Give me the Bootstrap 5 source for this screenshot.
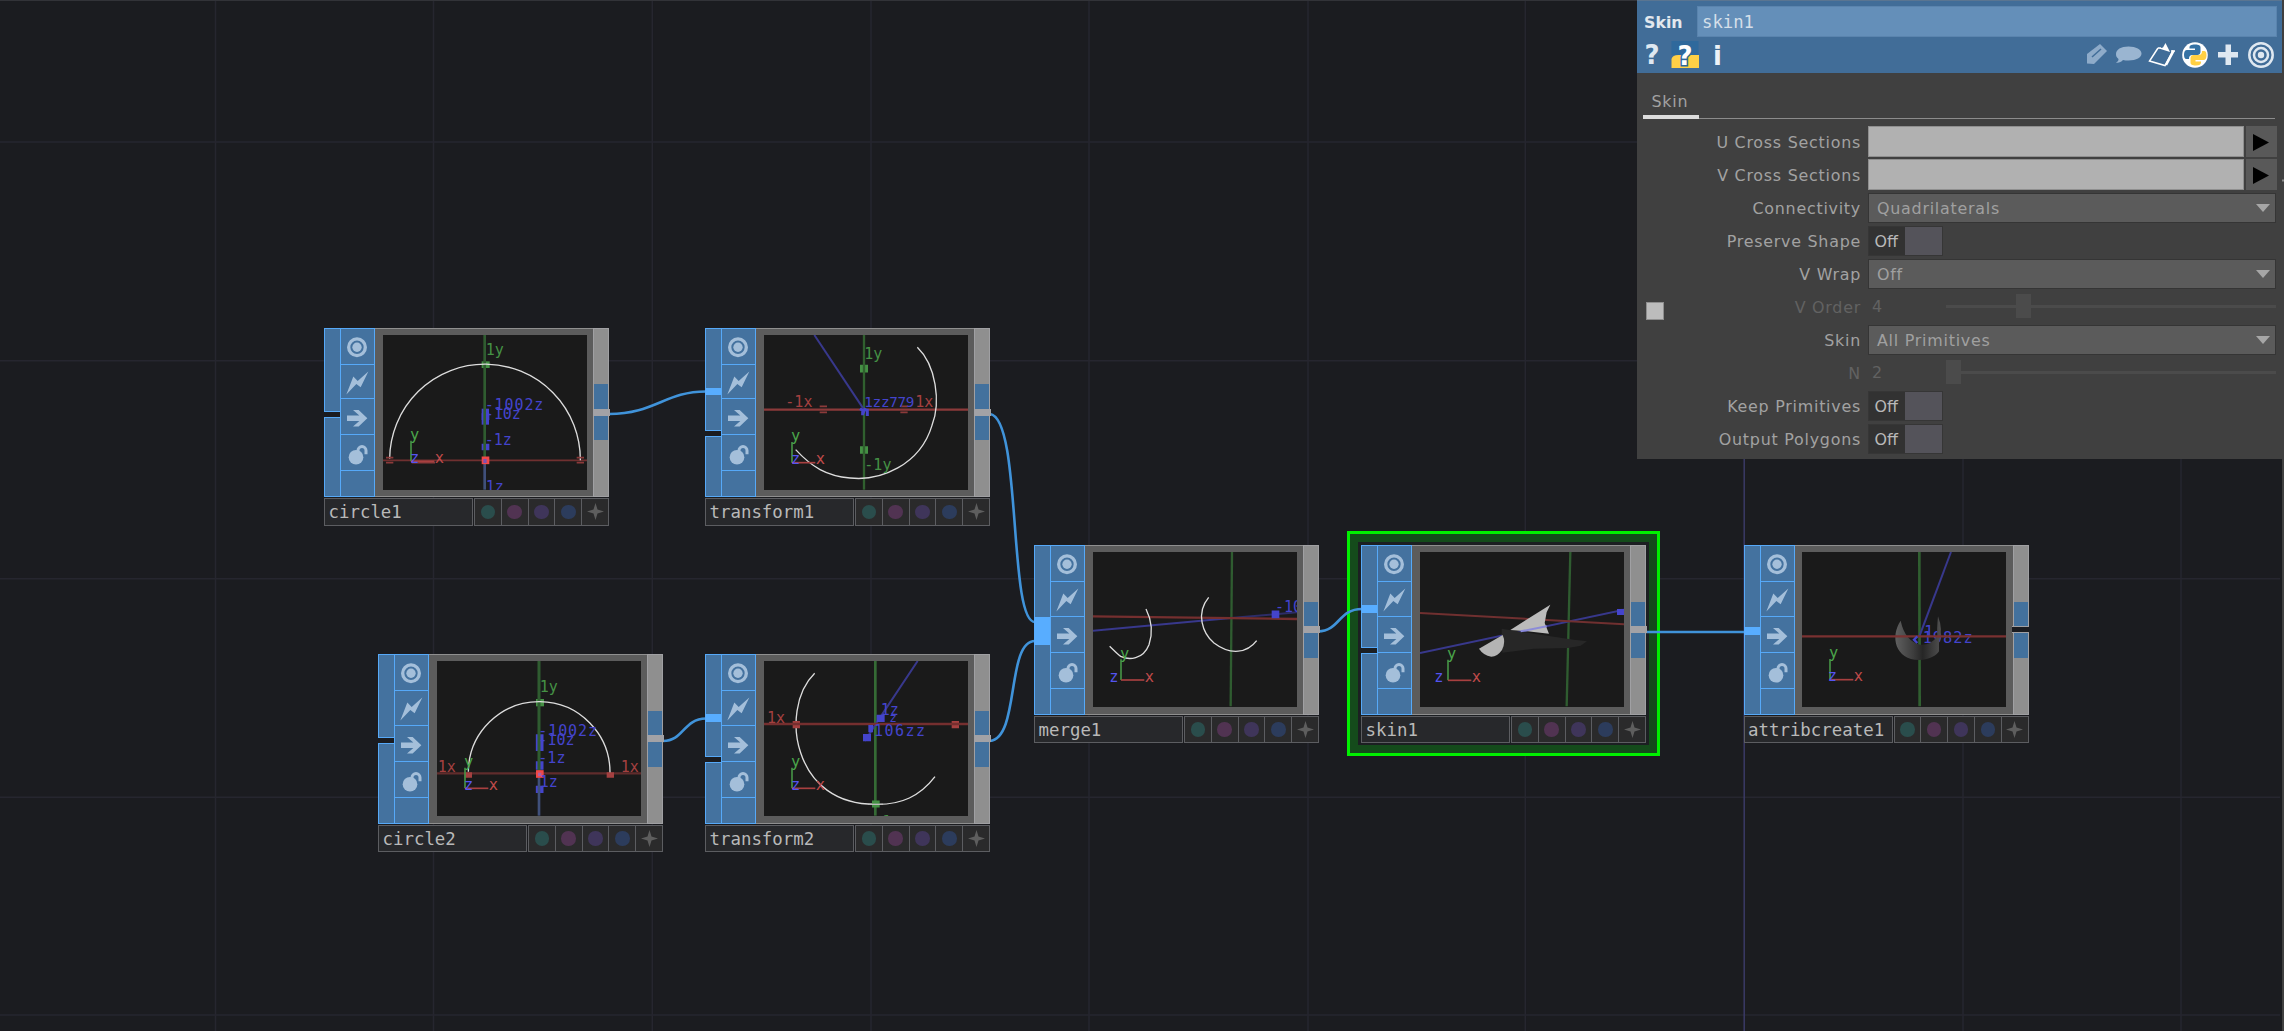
<!DOCTYPE html>
<html lang="en">
<head>
<meta charset="utf-8">
<title>Network editor</title>
<link href="https://cdn.jsdelivr.net/npm/bootstrap@5.3.0/dist/css/bootstrap.min.css" rel="stylesheet">
<style>
body{background:#1b1c20;font-family:"DejaVu Sans",sans-serif;width:2284px;height:1031px;overflow:hidden}
.network{width:2284px;height:1031px;overflow:hidden}
.network>svg{left:0;top:0}
.op{width:285px}
.op-body{height:169.5px}
.inputs{width:17px;margin-right:-1px}
.in-seg{background:#44729f;border:1.5px solid #56a9f8}
.plug{left:0;width:16px;background:#58adff}
.flags{width:35px;background:#44729f;border:1.5px solid #56a9f8}
.flags svg{width:33px;display:block;border-bottom:1.5px solid #56a9f8}
.viewer{width:218px;background:#5c5c5c;border:1.5px solid #8f8f8f;border-width:1.5px 0 1.5px 0;padding:6px 6.5px 5.5px 7.5px}
.viewer svg{width:204px;height:155px;display:block;background:#1a1a1a;font:51px "DejaVu Sans Mono",monospace}
.outs{width:16px;background:#8f8f8f;border:1.5px solid #a0a0a3}
.outs i{display:block;height:24.5px;background:#43719d;width:14px}
.op-foot{margin-top:1px;height:27.5px}
.op-name{width:149px;background:#27282b;border:1.5px solid #5c5d61;color:#b9b9b9;font:17.4px/26px "DejaVu Sans Mono",monospace;padding-left:3.500px;margin-right:1px;white-space:nowrap}
.swatches{width:135px;background:#2a2a2b;border:1.5px solid #5c5d61}
.swatches span{flex:1;border-right:1.5px solid #5c5d61}
.swatches span:last-child{border:0}
.swatches i{width:14.5px;height:14.5px;border-radius:50%;display:block}
.picked{left:1347px;top:531px;width:313px;height:225px;border:3px solid #00f000;background:#144b1b;padding:8px}
.picked div{background:#1c1f22}
.panel{left:1637px;top:0;width:645px;height:459px;background:#404040;color:#a2a2a2;font-size:15.900px;letter-spacing:.75px}
.head{height:72.5px;background:#416d98;border-top:1px solid #5a7591;padding:5px 5px 0 7px}
.head strong{width:53px;color:#e3e8ee;font-size:15.800px;letter-spacing:0;padding-top:5px}
.op-field{height:30.5px;background:#648fb9;border:1px solid #5a84ae;color:#d5dfe9;font:17.3px/30px "DejaVu Sans Mono",monospace;letter-spacing:0;padding-left:4px}
.tools{height:34px;margin-top:-1px}
.edge{left:2282px;top:0;width:2px;height:1031px;background:#404040}
.tabs{margin:15.5px 7px 0 6px;height:31px;border-bottom:1.5px solid #8c8c8c}
.tabs span{width:55.5px;height:31px;line-height:28px;border-bottom:4px solid #dcdcdc;padding-left:8.500px}
.params{padding-top:6px}
.prm{height:33px}
.prm label{width:224px;text-align:right;line-height:36px;margin-right:7px;white-space:nowrap}
.off-state{color:#626262}
.fld{height:31px;width:375.5px;margin-top:1px;background:#b1b1b1;border:solid #8f8f8f;border-width:1px}
.go{height:31px;width:31px;background:#595959;margin:1px 0 0 2.5px;padding:8px 0 0 6.5px}
.menu-fld{width:408px;height:30px;margin-top:1.5px;background:#5b5b5b;border:1.5px solid #353535;padding:0 5px 0 8px;line-height:30px;color:#a0a0a0}
.menu-fld span{padding-top:2px}
.tog{width:75px;height:30px;margin-top:1.5px;background:#323232;border:1.5px solid #363636;padding-left:5.500px;color:#b9b9b9;letter-spacing:0;line-height:30px}
.tog i{width:37px;height:28px;background:#54535a}
.val{width:78px;padding-left:4px;line-height:33px}
.track{width:330px;height:24px;margin-top:4px}
.track i{height:3px;background:#4b4b4b;flex:1}
.track b{width:15px;height:24px;background:#4b4b4b}
.check{width:18px;height:18px;background:#bcbcbc;border:1.5px solid #8e8e8e;margin:11.5px 0 0 9px}
.prm.chk label{width:197px}
.arrow{width:14px;height:8px}
</style>
<script src="https://cdn.jsdelivr.net/npm/bootstrap@5.3.0/dist/js/bootstrap.bundle.min.js"></script>
</head>
<body>
<main class="network position-relative">
<svg class="position-absolute" width="2284" height="1031" fill="none">
  <g stroke="#26262f" stroke-width="1.5">
    <path d="M215.5 0V1031M433.5 0V1031M652.3 0V1031M871 0V1031M1089 0V1031M1308 0V1031M1525.3 0V1031M1963 0V1031M2181 0V1031"/>
    <path d="M0 142H2280M0 360.8H2280M0 578.7H2280M0 797.3H2280M0 1015H2280"/>
  </g>
  <path d="M1744.2 0V1031" stroke="#3a3a66" stroke-width="1.5"/>
  <path d="M0 .5H2284" stroke="#323338"/>
</svg>
<div class="picked position-absolute d-flex"><div class="flex-fill"></div></div>
<svg class="position-absolute" width="2284" height="1031" fill="none" stroke="#4093da" stroke-width="2.6">
  <path d="M609 414C655 414 665 391.500 706 391.500"/>
  <path d="M663 741C684 741 683 719 706 718.500"/>
  <path d="M990 414C1022 418 1008 622 1035 622"/>
  <path d="M990 741C1020 738 1006 641 1035 641"/>
  <path d="M1318 631.500C1340 631 1338 609 1362 609"/>
  <path d="M1645 632H1744"/>
</svg>
<div id="ops"></div>

<section class="panel position-absolute">
  <div class="head">
    <div class="d-flex"><strong>Skin</strong><div class="op-field flex-fill">skin1</div></div>
    <svg class="tools d-block" width="633" height="34" viewBox="1644 36 633 34">
      <g font-family="DejaVu Sans" font-weight="bold" font-size="26" fill="#dfe8f1" letter-spacing="0">
        <text x="1644.500" y="64">?</text>
        <path fill="#2f699c" d="M1671.500 41h27v14h-27z"/>
        <path fill="#ffd046" d="M1671.500 68V59q1-4 7-4h20.500V68z"/>
        <text x="1677.500" y="64.500" stroke="#2f699c" stroke-width="3" paint-order="stroke" fill="#fff">?</text>
        <text x="1713" y="64.500" fill="#edf2f7">i</text>
      </g>
      <path fill="#8eabc9" d="M2087 63.500V54l13-10 7 7-13 13z"/><path stroke="#416d98" stroke-width="1.500" d="M2092 57l9-8"/>
      <path fill="#9ab5d1" d="M2128.500 46.500c7.500 0 13 3 13 7s-5 7-13 7c-2 0-4 0-5.500-.5-2 2.500-5 3-7 2.500 2-1 2.500-2 2.500-3.500-2-1.500-2.500-3-2.500-5 0-4.500 5-7.500 12.500-7.500z"/>
      <g fill="none" stroke="#fff" stroke-width="1.500"><path d="M2158 48l-8.500 13 15.500 4.500 8-15"/><path d="M2173.500 51l-7.500 14" stroke-width="2.500"/><path d="M2158 48l3 0M2171 51h4"/><path stroke="none" fill="#fff" d="M2159 48.500l4-1 2.500-4.500 2.500 5 2 4z"/></g>
      <circle cx="2195" cy="55" r="12.800" fill="#fff"/>
      <path fill="#3572a5" d="M2195 44.500c4 0 5.500 1 5.500 3v4.500c0 2-1.500 3-3 3h-5c-2.500 0-3.500 1.500-3.500 4h-2.500c-2 0-2.500-2-2.500-4.500s1-4.500 3-4.500h8v-1.500h-5.500v-1c0-2 1.500-3 5.500-3z"/>
      <path fill="#ffd043" d="M2196 65.500c-4 0-5.500-1-5.500-3V58c0-2 1.500-3 3-3h5c2.500 0 3.500-1.500 3.500-4h2c2 0 2.500 2 2.500 4.500s-1 4.500-3 4.500h-8v1.500h5.500v1c0 2-1.500 3-5 3z"/>
      <path fill="#dfe8f1" d="M2225.500 44.500h5.500v7.500h7v5.500h-7v7.500h-5.500v-7.500h-7.500v-5.500h7.500z"/>
      <g fill="none" stroke="#dfe8f1" stroke-width="2.500"><circle cx="2261" cy="55" r="11.700"/><circle cx="2261" cy="55" r="7"/></g><circle cx="2261" cy="55" r="3.200" fill="#dfe8f1"/>
    </svg>
  </div>
  <div class="tabs d-flex"><span>Skin</span></div>
  <div class="params">
    <div class="prm d-flex"><label>U Cross Sections</label><div class="fld"></div><div class="go"><svg width="16" height="17" class="d-block"><path d="M0 0L16 8.500 0 17z"/></svg></div></div>
    <div class="prm d-flex"><label>V Cross Sections</label><div class="fld"></div><div class="go"><svg width="16" height="17" class="d-block"><path d="M0 0L16 8.500 0 17z"/></svg></div></div>
    <div class="prm d-flex"><label>Connectivity</label><div class="menu-fld d-flex justify-content-between align-items-center"><span>Quadrilaterals</span><svg class="arrow"><path d="M0 0H14L7 8z" fill="#a6a6a6"/></svg></div></div>
    <div class="prm d-flex"><label>Preserve Shape</label><div class="tog d-flex justify-content-between"><span>Off</span><i></i></div></div>
    <div class="prm d-flex"><label>V Wrap</label><div class="menu-fld d-flex justify-content-between align-items-center"><span>Off</span><svg class="arrow"><path d="M0 0H14L7 8z" fill="#a6a6a6"/></svg></div></div>
    <div class="prm chk d-flex off-state"><div class="check"></div><label>V Order</label><span class="val">4</span><div class="track d-flex align-items-center"><i style="flex:0 0 70px"></i><b></b><i></i></div></div>
    <div class="prm d-flex"><label>Skin</label><div class="menu-fld d-flex justify-content-between align-items-center"><span>All Primitives</span><svg class="arrow"><path d="M0 0H14L7 8z" fill="#a6a6a6"/></svg></div></div>
    <div class="prm d-flex off-state"><label>N</label><span class="val">2</span><div class="track d-flex align-items-center"><b></b><i></i></div></div>
    <div class="prm d-flex"><label>Keep Primitives</label><div class="tog d-flex justify-content-between"><span>Off</span><i></i></div></div>
    <div class="prm d-flex"><label>Output Polygons</label><div class="tog d-flex justify-content-between"><span>Off</span><i></i></div></div>
  </div>
</section>
<div class="edge position-absolute"></div>
<svg class="position-absolute" width="2284" height="1031"><path d="M2282 180.500h2" stroke="#8a8a8a" stroke-width="2"/></svg>
</main>
<script>
const R='#8c3a3a', G='#2f5c30', B='#38388c';
// Small x / y / z gnomon drawn in the corner of each viewer.
const axes=(x,y,zx=0)=>`<path d="M${x} ${y}V${y-62}" stroke="#459145" stroke-width="5"/><path d="M${x} ${y}H${x+70}" stroke="#a84040" stroke-width="5"/><g font-size="46"><text x="${x-3}" y="${y-64}" fill="#4ba64b">y</text><text x="${x+71}" y="${y+5}" fill="#c04a4a">x</text><text x="${x-3+zx}" y="${y+5}" fill="#5454f0">z</text></g>`;
// Axis label; w fixes the advance width where several labels run together.
const t=(x,y,s,c,z=45,w=0)=>`<text x="${x}" y="${y}" fill="${c}" font-size="${z}"${w?` textLength="${w}"`:''}>${s}</text>`;
const gz='#459145', rz='#a44040', bz='#4444cc';
const ops=[
 {n:'circle1',x:324,y:327.5,gap:84,vb:'219 59',d:
  `<path d="M515 304h23M515 395h23" stroke="${bz}" stroke-width="20"/><path d="M526 280v48" stroke="${bz}" stroke-width="22"/><path d="M515 148h24" stroke="${gz}" stroke-width="20"/>
  <path d="M219 435H831" stroke="#703030" stroke-width="5"/><path d="M524 59V435" stroke="${G}" stroke-width="8"/><path d="M524 435V523" stroke="#40507a" stroke-width="8"/>
  <path d="M239 430A286 286 0 0 1 811 435" stroke="#ddd" stroke-width="4"/>
  <path d="M228 427h22M228 442h22M800 427h22M800 442h22M305 442h70" stroke="${R}" stroke-width="5"/>
  <path d="M515 435h23" stroke="#f04848" stroke-width="23"/><path d="M520 437h10" stroke="#8050b0" stroke-width="12"/>${t(527,118,'1y',gz)}${t(524,283,'-1002z',bz,45,176)}${t(524,311,'-10z',bz)}${t(524,388,'-1z',bz)}${t(527,529,'1z',bz)}${axes(303,438)}`},
 {n:'transform1',x:705,y:327.5,plug:60,gap:103,vb:'222 59',d:
  `<path d="M510 160h24M510 404h24" stroke="${gz}" stroke-width="23"/><path d="M222 283H834" stroke="${R}" stroke-width="7"/><path d="M522 59V523" stroke="#30602f" stroke-width="7"/><path d="M373 59L522 283" stroke="${B}" stroke-width="6"/><path d="M682 96C738 150 753 260 726 330C690 450 570 498 480 488C410 482 365 455 317 403" stroke="#ddd" stroke-width="4"/>
  <path d="M389 273h22M389 291h22M631 273h22M631 291h22" stroke="${R}" stroke-width="5"/><path d="M510 280l8 6v14m8-22l-8 18m14-16v22" stroke="${bz}" stroke-width="9"/>
  ${t(523,132,'1y',gz)}${t(523,463,'-1y',gz)}${t(286,274,'-1x',rz)}${t(676,274,'1x',rz)}${t(523,274,'1zz779',bz,43,150)}${axes(306,442)}`},
 {n:'circle2',x:378,y:654,gap:84,vb:'216 50',d:
  `<path d="M524 270v50M524 351v25M524 424v22" stroke="${bz}" stroke-width="23"/><path d="M513 175h24" stroke="${gz}" stroke-width="22"/>
  <path d="M216 387H828" stroke="#602c2c" stroke-width="7"/><path d="M522 50V387" stroke="${G}" stroke-width="9"/><path d="M522 387V514" stroke="#40507a" stroke-width="8"/>
  <path d="M310 382A212 212 0 0 1 735 387" stroke="#ddd" stroke-width="4"/><path d="M299 392h22M725 392h22" stroke="${rz}" stroke-width="17"/><path d="M513 389h23" stroke="#f04848" stroke-width="23"/><path d="M519 390h10" stroke="#b060a0" stroke-width="10"/>
  ${t(524,144,'1y',gz)}${t(218,383,'1x',rz)}${t(767,383,'1x',rz)}${t(520,274,'-1002z',bz,45,176)}${t(520,303,'-10z',bz)}${t(520,355,'-1z',bz)}${t(524,428,'1z',bz)}${axes(300,432)}`},
 {n:'transform2',x:705,y:654,plug:60,gap:103,vb:'222 50',d:
  `<path d="M556 50V514" stroke="#356b35" stroke-width="8"/><path d="M683 50L558 238L525 290" stroke="${B}" stroke-width="6"/><path d="M374 87C315 145 306 250 332 325C363 420 440 480 555 480C635 482 690 455 735 397" stroke="#ddd" stroke-width="4"/><path d="M308 241h22M785 241h22" stroke="${rz}" stroke-width="22"/><path d="M222 239H834" stroke="#752f2f" stroke-width="8"/>
  <path d="M546 479h23" stroke="${gz}" stroke-width="21"/><path d="M534 480h45" stroke="#bbb" stroke-width="4"/><path d="M519 280h24M535 253h14M560 222h24" stroke="${bz}" stroke-width="22"/>
  ${t(231,236,'1x',rz)}${t(831,236,'-',rz)}${t(572,213,'1z',bz)}${t(598,232,'z',bz,38)}${t(552,275,'106zz',bz,45,153)}${t(577,548,'1',gz)}${axes(306,432)}`},
 {n:'merge1',x:1034,y:545,block:71.5,vb:'217 67',d:
  `<path d="M634 67L630 530" stroke="${G}" stroke-width="7"/><path d="M217 303L631 265" stroke="${B}" stroke-width="6"/><path d="M631 265L830 248" stroke="#2d2d68" stroke-width="6"/><path d="M217 260L830 268" stroke="#752f2f" stroke-width="7"/>
  <path d="M376 238C397 280 395 315 385 345C367 390 325 392 300 380C288 372 278 360 267 350M564 203C525 250 545 310 580 340C630 378 680 370 708 333" stroke="#ddd" stroke-width="4"/><path d="M753 254h23" stroke="${bz}" stroke-width="23"/>${t(763,247,'-100',bz)}${axes(301,451,-32)}`},
 {n:'skin1',x:1361,y:545,plug:60,gap:103,vb:'238 82',d:
  `<path d="M689 82L678 545" stroke="${G}" stroke-width="7"/><path d="M238 385L852 255" stroke="${B}" stroke-width="6"/><path d="M238 265L852 299" stroke="#703030" stroke-width="6"/><path fill="#272727" d="M483 312L600 330L700 345L739 350L720 363L682 370L580 372L485 384z"/>
  <path fill="#bbb" d="M509 316L629 240L618 263L612 295L625 327L560 320z"/><path fill="#b4b4b4" d="M415 372L486 331Q496 352 484 376Q470 396 452 396Q428 392 415 372z"/><path d="M540 320L618 305" stroke="#8c8cd8" stroke-width="6"/><path d="M829 262h23" stroke="${bz}" stroke-width="18"/>${t(833,268,'-1',bz)}${axes(322,467,-38)}`},
 {n:'attribcreate1',x:1743.5,y:545,plug:82,split:1,vb:'216 67',d:
  `<defs><linearGradient id="moon"><stop stop-color="#606060"/><stop offset=".4" stop-color="#3c3c3c"/><stop offset=".6" stop-color="#262626"/><stop offset="1" stop-color="#505050"/></linearGradient></defs><path d="M568 67L569 530" stroke="#305f30" stroke-width="8"/><path d="M663 67L568 320" stroke="${B}" stroke-width="6"/>${t(578,340,'1982z',bz,46,150)}${t(583,322,'1',bz)}
  <path fill="url(#moon)" d="M512 273C480 320 495 390 568 391C600 391 622 375 627 365V336Q640 300 624 260Q620 300 622 318Q605 346 572 345Q525 335 512 273z"/><path d="M216 320H828" stroke="#7a3131" stroke-width="7"/><path d="M562 320l-10 10 10 10" stroke="${bz}" stroke-width="7"/>${axes(300,450,-4)}`}
];
const flag=(y,h,b)=>`<svg viewBox="94 ${y} 99 ${h*3}" height="${h+1.5}" fill="#a4bfda">${b}</svg>`;
const flags=flag(40,34.5,'<circle cx="142" cy="94" r="25" fill="none" stroke="#a4bfda" stroke-width="10"/><circle cx="142" cy="94" r="14"/>')
 +flag(149,33,'<path d="M176 168L153 215 140 205 110 237 131 183 144 196z"/>')
 +flag(252,34.5,'<path d="M112 301h37l-19-17h17l26 25-26 25h-17l19-17h-37z"/>')
 +flag(360,34.5,'<circle cx="139" cy="426" r="22"/><path d="M145 412v-6a12 12 0 0 1 24 0v11" fill="none" stroke="#a4bfda" stroke-width="9"/>');
const seg=(top,bot)=>`<div class="in-seg position-absolute w-100" style="top:${top}px;height:${bot-top}px"></div>`;
document.getElementById('ops').innerHTML=ops.map(o=>`
<article class="op position-absolute" style="left:${o.x}px;top:${o.y}px">
 <div class="op-body d-flex">
  <div class="inputs position-relative">${o.gap?seg(0,o.gap)+seg(o.gap+5,169.5):seg(0,169.5)}${o.plug||o.block?`<div class="plug position-absolute" style="top:${o.plug||o.block}px;height:${o.block?28.5:7.5}px"></div>`:''}</div>
  <div class="flags position-relative">${flags}</div>
  <div class="viewer"><svg viewBox="${o.vb} 612 465" fill="none">${o.d}</svg></div>
  <div class="outs d-flex flex-column justify-content-center"><i></i><div style="height:7px;margin:0 -1.5px;background:${o.split?'#1b1c20':'#a2a2a6'};${o.split?'border:solid #a0a0a3;border-width:1.5px 0':''}"></div><i></i></div>
 </div>
 <div class="op-foot d-flex"><div class="op-name">${o.n}</div>
  <div class="swatches d-flex">${['#2a4d4c','#513352','#3f355a','#2c3c5c'].map(c=>`<span class="d-flex align-items-center justify-content-center"><i style="background:${c}"></i></span>`).join('')}<span class="d-flex align-items-center justify-content-center"><svg width="17" height="17"><path fill="#5e5e5e" d="M8.500 0l2 6.500 6.500 2-6.500 2-2 6.500-2-6.500-6.500-2 6.500-2z"/></svg></span></div>
 </div>
</article>`).join('');
</script>
</body>
</html>
